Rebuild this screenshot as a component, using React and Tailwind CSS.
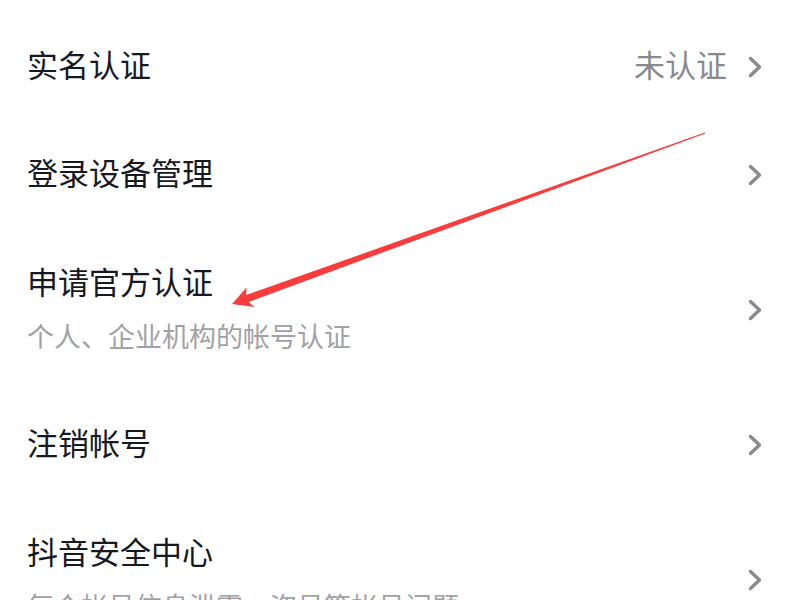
import { memo } from 'react'

const ROWS = [
  { title: '实名认证', value: '未认证' },
  { title: '登录设备管理' },
  { title: '申请官方认证', desc: '个人、企业机构的帐号认证' },
  { title: '注销帐号' },
  { title: '抖音安全中心', desc: '每个帐号信息泄露，盗号等帐号问题' },
]

const Chevron = () => (
  <svg width="14" height="22" viewBox="0 0 14 22" fill="none" className="shrink-0 mt-[5px]">
    <path d="M2.5 2.5 L11.5 11 L2.5 19.5" stroke="#8a8a8e" strokeWidth="3.4" strokeLinecap="round" strokeLinejoin="round" />
  </svg>
)

const SettingRow = memo(function SettingRow({ title, value, desc }) {
  return (
    <div className={`flex items-center justify-between pl-[27px] pr-[38px] ${desc ? 'h-[162px]' : 'h-[108px]'}`}>
      <div className="flex flex-col gap-[21px]">
        <span className="text-[31px] leading-[36px] text-[#161823]">{title}</span>
        {desc && <span className="text-[27px] leading-[32px] text-[#a2a2a6]">{desc}</span>}
      </div>
      <div className="flex items-center gap-[21px]">
        {value && <span className="text-[31px] leading-[36px] text-[#8a8a8e]">{value}</span>}
        <Chevron />
      </div>
    </div>
  )
})

// red annotation arrow drawn over the list
const Arrow = () => (
  <svg className="absolute inset-0 pointer-events-none" width="800" height="600" viewBox="0 0 800 600">
    <polygon
      points="232,304 246.5,287.5 246.2,295.0 704.8,132.6 705.2,133.4 248.6,302.0 254.5,307.0"
      fill="#fa3c3c"
    />
  </svg>
)

export default function App() {
  return (
    <div
      className="relative w-[800px] h-[600px] overflow-hidden bg-white pt-[10px]"
      style={{ fontFamily: '"Noto Sans CJK SC", "Noto Sans", sans-serif' }}
    >
      {ROWS.map((row) => (
        <SettingRow key={row.title} {...row} />
      ))}
      <Arrow />
    </div>
  )
}
